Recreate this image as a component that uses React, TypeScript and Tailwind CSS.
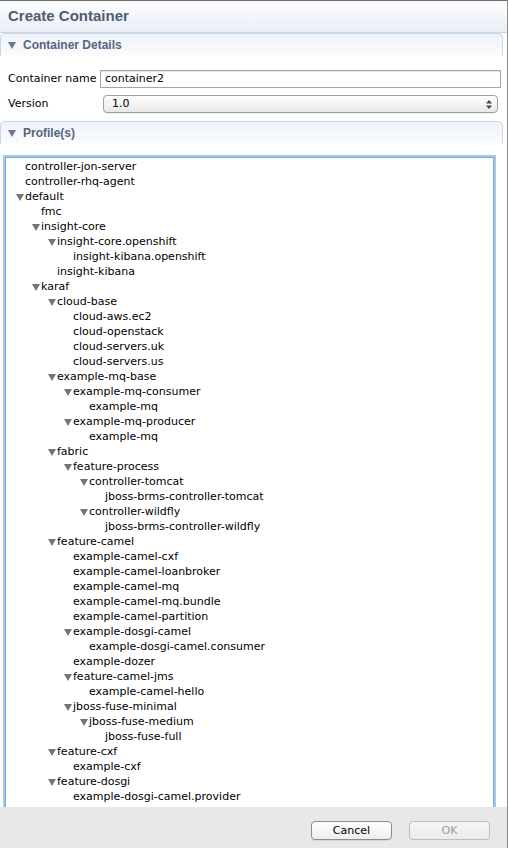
import React from 'react';

type Node = { label: string; level: number; open?: boolean };

const tree: Node[] = [
  { label: 'controller-jon-server', level: 0 },
  { label: 'controller-rhq-agent', level: 0 },
  { label: 'default', level: 0, open: true },
  { label: 'fmc', level: 1 },
  { label: 'insight-core', level: 1, open: true },
  { label: 'insight-core.openshift', level: 2, open: true },
  { label: 'insight-kibana.openshift', level: 3 },
  { label: 'insight-kibana', level: 2 },
  { label: 'karaf', level: 1, open: true },
  { label: 'cloud-base', level: 2, open: true },
  { label: 'cloud-aws.ec2', level: 3 },
  { label: 'cloud-openstack', level: 3 },
  { label: 'cloud-servers.uk', level: 3 },
  { label: 'cloud-servers.us', level: 3 },
  { label: 'example-mq-base', level: 2, open: true },
  { label: 'example-mq-consumer', level: 3, open: true },
  { label: 'example-mq', level: 4 },
  { label: 'example-mq-producer', level: 3, open: true },
  { label: 'example-mq', level: 4 },
  { label: 'fabric', level: 2, open: true },
  { label: 'feature-process', level: 3, open: true },
  { label: 'controller-tomcat', level: 4, open: true },
  { label: 'jboss-brms-controller-tomcat', level: 5 },
  { label: 'controller-wildfly', level: 4, open: true },
  { label: 'jboss-brms-controller-wildfly', level: 5 },
  { label: 'feature-camel', level: 2, open: true },
  { label: 'example-camel-cxf', level: 3 },
  { label: 'example-camel-loanbroker', level: 3 },
  { label: 'example-camel-mq', level: 3 },
  { label: 'example-camel-mq.bundle', level: 3 },
  { label: 'example-camel-partition', level: 3 },
  { label: 'example-dosgi-camel', level: 3, open: true },
  { label: 'example-dosgi-camel.consumer', level: 4 },
  { label: 'example-dozer', level: 3 },
  { label: 'feature-camel-jms', level: 3, open: true },
  { label: 'example-camel-hello', level: 4 },
  { label: 'jboss-fuse-minimal', level: 3, open: true },
  { label: 'jboss-fuse-medium', level: 4, open: true },
  { label: 'jboss-fuse-full', level: 5 },
  { label: 'feature-cxf', level: 2, open: true },
  { label: 'example-cxf', level: 3 },
  { label: 'feature-dosgi', level: 2, open: true },
  { label: 'example-dosgi-camel.provider', level: 3 },
  { label: 'feature-fabric-web', level: 2, open: true },
];

const indent = ['pl-[10px]', 'pl-[26px]', 'pl-[42px]', 'pl-[58px]', 'pl-[74px]', 'pl-[90px]'];

const Disclosure = ({ color = '#747474' }: { color?: string }) => (
  <svg width="8" height="7" viewBox="0 0 8 7">
    <path d="M0 0 L8 0 L4 7 Z" fill={color} />
  </svg>
);

const SectionHeader = ({ title }: { title: string }) => (
  <div className="h-[23px] mr-[4px] flex items-center rounded-t-[5px] border-t border-l border-r border-[#c9d6e8] bg-gradient-to-b from-[#eef2f9] to-[#fbfcfe]">
    <div className="w-[22px] pl-[7px] flex items-center">
      <Disclosure color="#6b7a8f" />
    </div>
    <span className="text-[12px] font-bold text-[#56667c]">{title}</span>
  </div>
);

export default function App() {
  return (
    <div
      className="w-[508px] h-[848px] flex flex-col bg-white border-r border-[#8d8d8d] overflow-hidden text-black"
      style={{ fontFamily: '"Liberation Sans", Arial, sans-serif' }}
    >
      <div className="h-[33px] shrink-0 flex items-center pl-[8px] border-t border-[#6e6e6e] border-b border-b-[#cad7ea] bg-gradient-to-b from-[#fdfdfe] to-[#e9eef6]">
        <span className="text-[15px] font-bold text-[#4f5d70]">Create Container</span>
      </div>

      <SectionHeader title="Container Details" />

      <div className="pt-[14px] pb-[8px]" style={{ fontFamily: '"DejaVu Sans", sans-serif' }}>
        <div className="flex items-center h-[18px]">
          <span className="w-[100px] pl-[8px] text-[11px]">Container name</span>
          <div className="w-[401px] h-[18px] flex items-center pl-[4px] border border-[#a6a6a6] shadow-[inset_0_1px_1px_rgba(0,0,0,0.12)] text-[11px]">
            container2
          </div>
        </div>
        <div className="flex items-center h-[18px] mt-[7px]">
          <span className="w-[103px] pl-[8px] pt-[1px] text-[11px]">Version</span>
          <div className="w-[395px] h-[18px] flex items-center justify-between pl-[8px] pr-[5px] rounded-[4px] border border-[#a0a0a0] bg-gradient-to-b from-[#fefefe] to-[#e8e8e8] shadow-[0_1px_0_rgba(0,0,0,0.06)] text-[11px]">
            <span>1.0</span>
            <svg width="6" height="9" viewBox="0 0 6 9">
              <path d="M0 3.5 L6 3.5 L3 0 Z M0 5.5 L6 5.5 L3 9 Z" fill="#444444" />
            </svg>
          </div>
        </div>
      </div>

      <SectionHeader title="Profile(s)" />

      <div className="flex-1 overflow-hidden pt-[13px] pl-[5px] pr-[13px]">
        <div
          className="h-[700px] border border-[#7ea4d4] shadow-[0_0_0_2px_#a8c9ee] bg-white pt-[2px]"
          style={{ fontFamily: '"DejaVu Sans", sans-serif' }}
        >
          {tree.map((n, i) => (
            <div key={i} className={`h-[15px] flex items-center text-[11px] ${indent[n.level]}`}>
              <span className="w-[9px] flex items-center">{n.open ? <Disclosure /> : null}</span>
              <span>{n.label}</span>
            </div>
          ))}
        </div>
      </div>

      <div
        className="h-[41px] shrink-0 bg-[#e8e8e8] flex items-start justify-end gap-[17px] pt-[14px] pr-[17px]"
        style={{ fontFamily: '"DejaVu Sans", sans-serif' }}
      >
        <button className="w-[81px] h-[19px] leading-[17px] rounded-[4px] border border-[#8c8c8c] bg-gradient-to-b from-[#ffffff] to-[#ededed] text-[11px] text-black shadow-[0_1px_0_rgba(0,0,0,0.08)]">
          Cancel
        </button>
        <button className="w-[81px] h-[19px] leading-[17px] rounded-[4px] border border-[#bdbdbd] bg-gradient-to-b from-[#f6f6f6] to-[#ececec] text-[11px] text-[#9c9c9c]">
          OK
        </button>
      </div>
    </div>
  );
}
